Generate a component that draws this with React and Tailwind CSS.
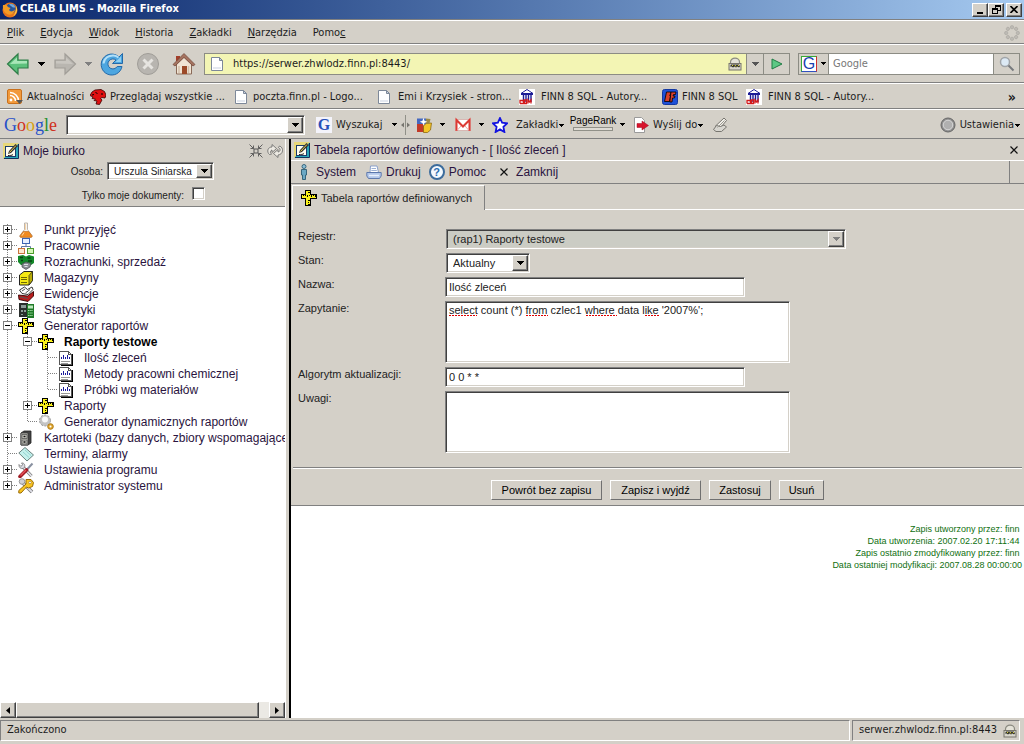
import React, { useState } from "react";

const sunken =
  "border border-t-[#808080] border-l-[#808080] border-r-white border-b-white shadow-[inset_1px_1px_0_#404040,inset_-1px_-1px_0_#d4d0c8]";
const raised =
  "border border-t-white border-l-white border-r-[#404040] border-b-[#404040] shadow-[inset_-1px_-1px_0_#808080] bg-[#d4d0c8]";
const toolbarLine = "border-b border-b-[#808080] shadow-[0_1px_0_#fff] mb-px";

/* ---------- small shared pieces ---------- */

const Caret = ({ className = "text-black" }) => (
  <svg className={`shrink-0 ${className}`} width="7" height="4" viewBox="0 0 7 4" shapeRendering="crispEdges" aria-hidden="true">
    <path d="M0 0h7v1H0zM1 1h5v1H1zM2 2h3v1H2zM3 3h1v1H3z" fill="currentColor" />
  </svg>
);

const SmallCaret = () => (
  <svg className="shrink-0" width="5" height="3" viewBox="0 0 5 3" shapeRendering="crispEdges" aria-hidden="true">
    <path d="M0 0h5v1H0zM1 1h3v1H1zM2 2h1v1H2z" fill="#000" />
  </svg>
);

const Icon = ({ size = 16, box = 16, children }) => (
  <svg className="shrink-0" width={size} height={size} viewBox={`0 0 ${box} ${box}`} fill="none" aria-hidden="true">
    {children}
  </svg>
);

const Select = ({ id, label, options, disabled, className }) => (
  <div className={`relative ${sunken} ${disabled ? "bg-[#cbccc4]" : "bg-white"} ${className}`}>
    <select
      id={id}
      aria-label={label}
      disabled={disabled}
      className="block h-full w-full appearance-none bg-transparent pl-1.5 pr-5 opacity-100 outline-none text-[#222]"
    >
      {options.map((o) => (
        <option key={o}>{o}</option>
      ))}
    </select>
    <span className={`pointer-events-none absolute inset-y-px right-px flex w-4 items-center justify-center ${raised}`}>
      <Caret className={disabled ? "text-[#808080]" : "text-black"} />
    </span>
  </div>
);

/* ---------- icons ---------- */

const FirefoxIcon = () => (
  <Icon>
    <circle cx="8" cy="8" r="7.5" fill="#e8741a" />
    <circle cx="8.6" cy="6.8" r="5" fill="#27559c" />
    <path d="M7 2.4c3-1.400 6 .6 6.400 3l-2.400.2L9 4z" fill="#6fa8dc" />
    <path d="M1 3c1.500.2 2.500-.8 3.500 0l1.500 2 2.500 1-1.500 2c1 2 4 2 6-.5C12 12 8 14 5 12 2 10.500.5 7 1 3z" fill="#f49b25" />
    <path d="M14 4c2 3 1.200 8-3 10.500 2-2.500 3.500-6 3-10.500z" fill="#fbd34b" />
  </Icon>
);

const BackIcon = () => (
  <Icon size={24} box={24}>
    <path d="M1.500 12L12 2v6h10v8H12v6z" fill="#5cc17c" stroke="#2f7d48" strokeWidth="1.200" />
    <path d="M4 12l7-6.500V9h10v2.500z" fill="#a8e6b8" />
  </Icon>
);

const ForwardIcon = () => (
  <Icon size={24} box={24}>
    <path d="M22.500 12L12 2v6H2v8h10v6z" fill="#b9b6b0" stroke="#a19e98" strokeWidth="1.200" />
    <path d="M20 12l-7-6.500V9H3v2.500z" fill="#c9c6c0" />
  </Icon>
);

const ReloadIcon = () => (
  <Icon size={24} box={24}>
    <path d="M22.500 1.500v10h-10l3.500-3.500a5 5 0 1 0 1.200 6.500h4.800A10.500 10.500 0 1 1 19 5z" fill="#4da6e0" stroke="#2469a8" />
    <path d="M3.500 11.500C4 6 9 3 14 3.500c2 .2 3.500 1.200 4.500 2" stroke="#b4e0f8" strokeWidth="2" />
    <path d="M21 4.500v5.500h-5.500z" fill="#8fd0f2" />
  </Icon>
);

const StopIcon = () => (
  <Icon size={24} box={24}>
    <circle cx="12" cy="12" r="10.500" fill="#b8b5b0" stroke="#a09d98" />
    <path d="M7.500 7.500l9 9M16.500 7.500l-9 9" stroke="#e6e4e0" strokeWidth="3" />
  </Icon>
);

const HomeIcon = () => (
  <Icon size={24} box={24}>
    <path d="M4 4h4v5H4z" fill="#a33f2a" />
    <path d="M4.500 12L12 5l7.500 7v10h-15z" fill="#f0e4d4" stroke="#8a6a58" />
    <path d="M1 12.500L12 1.500l11 11-2 1.500-9-8.500L3 14z" fill="#a57360" stroke="#6d4336" strokeWidth=".7" />
    <path d="M10 14h5v8h-5z" fill="#9c4a28" />
    <path d="M16.500 14v7M7 14v7" stroke="#d3c0ac" strokeWidth="1.500" />
  </Icon>
);

const PageIcon = () => (
  <Icon>
    <path d="M2.500 1.500h8l3 3v10h-11z" fill="#fff" stroke="#7d8899" />
    <path d="M10.500 1.500v3h3z" fill="#c9d3e2" stroke="#7d8899" />
    <path d="M4 11h8v2H4z" fill="#e4e8f0" />
  </Icon>
);

const RssIcon = () => (
  <Icon>
    <rect x=".5" y=".5" width="14" height="14" rx="1.500" fill="#f29a3c" stroke="#c8701c" />
    <circle cx="4" cy="11" r="1.400" fill="#fff" />
    <path d="M3 6.500a5.500 5.500 0 0 1 5.500 5.500M3 3.500a8.500 8.500 0 0 1 8.500 8.500" stroke="#fff" strokeWidth="1.600" />
    <path d="M9 11h7l-3.500 4z" fill="#555" />
  </Icon>
);

const DragonIcon = () => (
  <Icon>
    <path d="M0 6.500L2 3l3-2 6-.5 3.500 2L16 6l-1 3-3-.5-1.500 1L12 11l-2.500 4.500L6 15l1-3-3-.5 1.500-1.500L2 9.500l1-1.500z" fill="#e01010" stroke="#3b0000" strokeWidth=".8" />
    <path d="M5.500 3.500l2 1M11 5h2M2 6l2-.5" stroke="#000" />
  </Icon>
);

const DomIcon = () => (
  <Icon>
    <rect width="16" height="16" fill="#fff" />
    <path d="M2 4.500L8 .5l6 4zM2 5.500h12" fill="#fff" stroke="#1c1c96" />
    <path d="M4.500 6v7M7 6v7M9.500 6v7M12 6v7" stroke="#1c1c96" strokeWidth="1.400" />
    <path d="M1 14.500h3.500v-4M1 14.500v-3h3M5.500 11v3.500h2V11zM9 14.500V11l1.500 2 1.500-2v3.500" stroke="#d21a1a" strokeWidth="1.300" />
  </Icon>
);

const BfIcon = () => (
  <Icon>
    <rect x=".5" y=".5" width="15" height="15" rx="2" fill="#1e50d8" stroke="#1438a0" />
    <path d="M4.500 3H9l-.5 3H7.500l1 1-1 5.500h-5z" fill="#d8402c" stroke="#000" strokeWidth=".8" />
    <path d="M9 3h5l-.5 2.500h-2L11 7h2l-.5 2h-2L10 13H7.800z" fill="#d8402c" stroke="#000" strokeWidth=".8" />
  </Icon>
);

const GBadge = ({ framed }) => (
  <span
    className={
      framed
        ? "flex h-4 w-4 items-center justify-center border border-t-[#38a838] border-l-[#38a838] border-r-[#d03030] border-b-[#3050c0] bg-white font-['Liberation_Sans',sans-serif] text-base leading-none text-[#1840b0]"
        : "flex h-4 w-4 shrink-0 items-center justify-center bg-[#f4f4fb] font-['Liberation_Serif',serif] text-base leading-none font-bold text-[#2850b8]"
    }
  >
    G
  </span>
);

const LockIcon = () => (
  <Icon size={14} box={14}>
    <path d="M2.500 6.500V5a4.500 3.800 0 0 1 9 0v1.500" fill="#e4e2d8" stroke="#8a8a80" strokeWidth="1.200" />
    <rect x="1" y="6.500" width="12" height="6.500" fill="#d8d6cc" stroke="#77756c" />
    <path d="M2 9.500L3 7.500h8l1 2-1 1-1.500-1L8 10.500l-1.500-1-1.500 1-1.500-1z" fill="#35352a" />
    <path d="M4 8l1 1M7 8l1 1.500M10 8l1 1" stroke="#d9cf3c" />
  </Icon>
);

const ThrobberIcon = () => (
  <Icon>
    {[0, 45, 90, 135, 180, 225, 270, 315].map((a) => (
      <circle key={a} cx="8" cy="2.200" r="1.700" fill="#bdbab4" stroke="#a5a29c" strokeWidth=".5" transform={`rotate(${a} 8 8)`} />
    ))}
  </Icon>
);

const SearchIcon = () => (
  <Icon>
    <circle cx="6" cy="6" r="4.500" fill="#dce9f4" stroke="#a0a4a8" strokeWidth="1.500" />
    <path d="M9.500 9.500l5 5" stroke="#77797c" strokeWidth="2" />
  </Icon>
);

const CubesIcon = () => (
  <Icon>
    <rect x="1" y="1.500" width="9" height="6" fill="#4468c0" />
    <rect x="1" y="7" width="7" height="8" fill="#c23a28" />
    <path d="M7.500 9L10 6.500l5.500-.5-1 7-3 2.500h-4z" fill="#f4c428" stroke="#8d6a10" strokeWidth=".8" />
    <path d="M10 1.500l4.500.5-1 4.500H9.500z" fill="#9c8a48" />
    <path d="M7.500.8l1 2.900 2.800 1.100-2.800 1.100-1 2.900-1-2.900-2.800-1.100 2.800-1.100z" fill="#fff" />
  </Icon>
);

const MailIcon = () => (
  <Icon>
    <rect x=".5" y="2.500" width="15" height="11" fill="#fff" stroke="#d8b8b4" />
    <path d="M1.500 14V3L8 9.500 14.500 3v11" stroke="#dc3a34" strokeWidth="2" />
    <path d="M2 13.500l4-4.500M14 13.500L10 9" stroke="#eaa8a4" />
  </Icon>
);

const StarIcon = () => (
  <Icon>
    <path d="M8 1l2.100 4.700 5 .6-3.700 3.500 1 5.200L8 12.400 3.600 15l1-5.200L.9 6.300l5-.6z" fill="#fff" stroke="#1414e0" strokeWidth="1.800" />
  </Icon>
);

const SendIcon = () => (
  <Icon>
    <path d="M1.500.5h7l3 3v12h-10z" fill="#fff" stroke="#9a9a9a" />
    <path d="M4 6.500h5V4l6.500 4.500L9 13v-2.500H4z" fill="#d8142c" stroke="#a00c20" strokeWidth=".5" />
  </Icon>
);

const PenIcon = () => (
  <Icon>
    <path d="M3 9.500L12 1l2.500 2.500L9 10z" fill="#f0eee8" stroke="#77756f" />
    <path d="M1.500 12.500l3-4 4 1L12 8l2.500 2-5 4.500H4z" fill="#d8d6d0" stroke="#77756f" />
    <path d="M5.500 10.500l7-7" stroke="#99978f" />
  </Icon>
);

const DeskIcon = () => (
  <Icon>
    <rect x=".5" y=".5" width="15" height="15" fill="#2aa7b8" />
    <path d="M0 0h16L0 16z" fill="#e8d878" />
    <rect x="2.500" y="3.500" width="10" height="10" fill="#fffdf0" stroke="#1a3a6c" />
    <path d="M5 11l1-3 6.500-7L15 3 8 10z" fill="#333" />
    <path d="M6.500 9.500L13 2.500" stroke="#e6c94a" />
    <path d="M5 12.500c2 0 4 0 5-1" stroke="#222" />
    <path d="M15.500 1v14.500H1" stroke="#10305c" />
  </Icon>
);

const ShrinkIcon = () => (
  <Icon size={14} box={14}>
    <rect x="5" y="5" width="4" height="4" stroke="#555" />
    <path d="M.5.5l4 4M4.500 1.500v3h-3M13.500.5l-4 4M9.500 1.500v3h3M.5 13.500l4-4M1.500 9.500h3v3M13.500 13.500l-4-4M12.500 9.500h-3v3" stroke="#555" strokeWidth=".9" />
  </Icon>
);

const RefreshIcon = () => (
  <Icon>
    <path d="M2.500 11.500C-.5 9 .5 4 5 4V1.500l4.500 4L5 9.500V7C3.500 7.500 2.500 9.500 4.500 11z" fill="#ece9e2" stroke="#666" strokeWidth=".8" />
    <path d="M12.500 3c4.500 1.500 4 8.500-1.500 9v2.500L6.500 10.500 11 6.500V9c2.500-.5 3-3 .5-4.500z" fill="#ece9e2" stroke="#666" strokeWidth=".8" />
  </Icon>
);

const RulerIcon = () => (
  <svg className="shrink-0" width="16" height="16" viewBox="0 0 16 16" shapeRendering="crispEdges" aria-hidden="true">
    <path d="M4 0h6v4h6v5h-6v7H4V9H0V4h4z" fill="#000" />
    <path d="M5 1h4v4h6v3H9v7H5V8H1V5h4z" fill="#f8f01c" />
    <path d="M2 5h1v1H2zM4 5h1v1H4zM6 5h1v2H6zM8 5h1v1H8zM10 5h1v2h-1zM12 5h1v1h-1zM14 5h1v2h-1zM7 2h2v1H7zM7 10h2v1H7zM7 12h1v1H7zM7 14h2v1H7z" fill="#000" />
  </svg>
);

const ReportIcon = () => (
  <svg className="shrink-0" width="16" height="16" viewBox="0 0 16 16" shapeRendering="crispEdges" fill="none" aria-hidden="true">
    <path d="M1.500 1.500h9l3 3v10h-12z" fill="#fff" stroke="#555" />
    <path d="M10.500 1.500v3h3" stroke="#555" />
    <path d="M14 4h1v12H3v-1h11z" fill="#000" />
    <path d="M3 7h1v2H3zM5 5h1v4H5zM7 7h1v2H7zM9 5h1v4H9zM11 7h1v2h-1z" fill="#1a1a9c" />
    <path d="M3 11h9v1H3zM3 13h7v1H3z" fill="#999" />
  </svg>
);

const FlaskIcon = () => (
  <Icon>
    <path d="M6.500 1h3v6.500l4.500 6c.3 1-.3 1.800-1 1.800H3c-.8 0-1.300-.8-1-1.800l4.500-6z" fill="#f4f4f4" stroke="#b0a498" strokeWidth=".8" />
    <path d="M5.200 9.500h5.600l3.200 4.300c.3 1-.3 1.500-1 1.500H3c-.8 0-1.300-.5-1-1.500z" fill="#f08a20" stroke="#b86418" strokeWidth=".6" />
    <path d="M6 10.500l-2 3.200M7.500 2v6" stroke="#fcd8a8" />
  </Icon>
);

const NetworkIcon = () => (
  <Icon>
    <rect x="4.500" y=".5" width="7" height="5" fill="#e8f0ff" stroke="#3c64b4" />
    <path d="M8 6v2M3.500 10V8.500h9V10" stroke="#6078a8" />
    <rect x=".5" y="10.500" width="6" height="5" fill="#ffe8d0" stroke="#c8743c" />
    <rect x="9.500" y="10.500" width="6" height="5" fill="#d4f8b8" stroke="#4c9c2c" />
  </Icon>
);

const MoneyIcon = () => (
  <Icon>
    <path d="M0 2l5-1 3 1.500L11 1l5 1.500V9l-3 2H3L0 8z" fill="#128828" />
    <path d="M2 3.500h3M9.500 4h3M3 6.500h2M10 7h4" stroke="#064510" strokeWidth="1.600" />
    <path d="M4 10l4-2 5 1.500-1 3.500-4 2.500L4 13z" fill="#8a8d94" stroke="#44464c" strokeWidth=".7" />
    <path d="M6 10.500h4M6.500 12.500h3" stroke="#dcdce4" />
  </Icon>
);

const BoxIcon = () => (
  <Icon>
    <path d="M1.500 5L6 1.500h8.500v9L11 15H1.500z" fill="#f4e814" stroke="#222" />
    <path d="M11 5.500V15l3.500-4.500v-9z" fill="#b8ac08" stroke="#222" strokeWidth=".7" />
    <path d="M3 7.500h6M3 9.500h6M3 12.500h6" stroke="#6c6600" />
  </Icon>
);

const TrayIcon = () => (
  <Icon>
    <path d="M1.500 4L6.500 1l3 2.500L14 1l1 2.500L10 8.500 4 7.500z" fill="#fff" stroke="#222" strokeWidth=".9" />
    <path d="M.5 9l9 1 6-4.500V10L10 15.500 1 13.500z" fill="#b81c1c" stroke="#300" strokeWidth=".9" />
    <path d="M4 5l3-2M7.500 7L12 3.500M2 11l7.500 1.500" stroke="#555" />
  </Icon>
);

const StatsIcon = () => (
  <Icon>
    <rect x="1" y="1" width="9" height="14" fill="#2a2e2c" />
    <path d="M3 3h5v3H3zM3 8h2v2H3zM6 8h2v2H6zM3 12h2v1H3z" fill="#8c9c98" />
    <rect x="9" y="2" width="7" height="14" fill="#1f7a28" />
    <path d="M10 3.500h5v3h-5z" fill="#bce8bc" />
    <path d="M10 8.500h5M10 11h5M10 13.500h5" stroke="#a4dca4" strokeDasharray="1.500 .7" />
  </Icon>
);

const GearIcon = () => (
  <Icon>
    <circle cx="7" cy="6.500" r="5.500" fill="#c4c4c4" />
    <circle cx="7" cy="6.500" r="5.500" stroke="#999" strokeDasharray="2 1.500" />
    <circle cx="7" cy="5.500" r="3" fill="#f8f8f8" />
    <circle cx="12.500" cy="12.500" r="2.800" fill="#e0a830" stroke="#b07c18" />
    <circle cx="12.500" cy="12.500" r="1" fill="#fff" />
  </Icon>
);

const CabinetIcon = () => (
  <Icon>
    <path d="M3 3l3-2h7v12l-3 2H3z" fill="#444" stroke="#222" strokeWidth=".8" />
    <path d="M3 3h7v12H3z" fill="#c8c8c0" stroke="#333" strokeWidth=".8" />
    <path d="M4 4.500h5v4H4zM4 10h5v4H4z" stroke="#555" strokeWidth=".8" />
    <path d="M5.500 6.500h2M5.500 12h2" stroke="#111" strokeWidth="1.400" />
  </Icon>
);

const NoteIcon = () => (
  <Icon>
    <path d="M7 1.500L15.500 9 9 15 .8 7z" fill="#c4f0ec" stroke="#68807c" />
    <path d="M7 4l6 5.500M5 6l6 5.500" stroke="#94d4d0" />
  </Icon>
);

const ToolsIcon = () => (
  <Icon>
    <path d="M4 4l9.500 10" stroke="#777" strokeWidth="3.200" />
    <path d="M4 4l9.500 10" stroke="#e4e4ea" strokeWidth="1.800" />
    <path d="M1 2.500L2.800 4.300l2-1.500L3.500 1C6 .5 7.500 3 6.500 5.500L5 6.500C2.500 7 .5 5 1 2.500z" fill="#dcdce4" stroke="#777" strokeWidth=".8" />
    <path d="M9 7.500L14.500 1.500" stroke="#8890a0" strokeWidth="2" />
    <path d="M8.500 8L2 14.500" stroke="#a01c24" strokeWidth="3.600" strokeLinecap="round" />
    <path d="M8 8L2.500 13.500" stroke="#e85058" strokeWidth="1.400" />
  </Icon>
);

const KeyIcon = () => (
  <Icon>
    <path d="M3 3l11 11" stroke="#777" strokeWidth="3.600" />
    <path d="M3 3l11 11" stroke="#dcdce4" strokeWidth="2" />
    <circle cx="4" cy="3.500" r="2.800" fill="#d0d0d4" stroke="#888" strokeWidth=".8" />
    <path d="M8 1.500h5l2.500 3-1 4-4 1.500-2-1-5.500 6H.8v-2.500L8 6z" fill="#f8c420" stroke="#9a6c08" />
    <circle cx="12" cy="4.500" r="1.300" fill="#fff" stroke="#9a6c08" strokeWidth=".6" />
  </Icon>
);

const PersonIcon = () => (
  <Icon>
    <circle cx="8" cy="2.500" r="2" fill="#8cc0d8" stroke="#2c5c74" strokeWidth=".9" />
    <path d="M5.500 5.500h5V11H9.500v4.500h-3V11h-1z" fill="#6ca8c4" stroke="#2c5c74" strokeWidth=".9" />
  </Icon>
);

const PrinterIcon = () => (
  <Icon>
    <path d="M4 8.500L4.500 2h6.500L12.500 8.500z" fill="#fff" stroke="#8098c8" strokeWidth=".9" />
    <path d="M.8 8.500h14.400v3.500l-1.700 2.500H2.500L.8 12z" fill="#b4c8ea" stroke="#5470a8" strokeWidth=".9" />
    <path d="M3 11.500h10" stroke="#e8f0fc" strokeWidth="1.400" />
    <path d="M5.500 4.500h4.500M5.300 6.500h5.500" stroke="#9cb0d4" />
  </Icon>
);

const HelpIcon = () => (
  <span className="flex h-4 w-4 shrink-0 items-center justify-center rounded-full border-2 border-[#3c6c9c] bg-[#f4faff] text-[11px] leading-none font-bold text-[#2a6cb0]">
    ?
  </span>
);

const CloseGlyph = () => (
  <svg width="8" height="8" viewBox="0 0 8 8" aria-hidden="true">
    <path d="M.5.5l7 7M7.500.5l-7 7" stroke="#111" strokeWidth="1.200" />
  </svg>
);

/* ---------- browser chrome ---------- */

const TitleBar = () => (
  <header className="flex h-[19px] shrink-0 items-center bg-gradient-to-r from-[#0a246a] to-[#a6caf0] px-0.5">
    <FirefoxIcon />
    <h1 className="ml-0.5 flex-1 font-bold text-white">CELAB LIMS - Mozilla Firefox</h1>
    <div className="flex">
      <button aria-label="Minimalizuj" className={`flex h-3.5 w-4 items-end justify-center pb-0.5 ${raised}`}>
        <span className="h-0.5 w-1.5 bg-black" />
      </button>
      <button aria-label="Przywróć" className={`flex h-3.5 w-4 items-center justify-center ${raised}`}>
        <svg width="9" height="9" viewBox="0 0 9 9" shapeRendering="crispEdges" fill="none">
          <path d="M3 0h6v6H6V5h2V2H4v1H3zM0 3h6v6H0zm1 2v3h4V5z" fill="#000" fillRule="evenodd" />
        </svg>
      </button>
      <button aria-label="Zamknij okno" className={`ml-0.5 flex h-3.5 w-4 items-center justify-center ${raised}`}>
        <svg width="8" height="7" viewBox="0 0 8 7">
          <path d="M.5 0l7 7M7.500 0l-7 7" stroke="#000" strokeWidth="1.600" />
        </svg>
      </button>
    </div>
  </header>
);

const menus = [
  ["", "P", "lik"],
  ["", "E", "dycja"],
  ["", "W", "idok"],
  ["", "H", "istoria"],
  ["", "Z", "akładki"],
  ["", "N", "arzędzia"],
  ["Pomo", "c", ""],
];

const MenuBar = () => (
  <nav className={`flex h-6 shrink-0 items-center gap-4 border-t border-t-white pl-[7px] pr-1 pt-0.5 ${toolbarLine}`}>
    {menus.map(([before, key, after]) => (
      <button key={before + key + after}>
        {before}
        <u>{key}</u>
        {after}
      </button>
    ))}
    <span className="ml-auto">
      <ThrobberIcon />
    </span>
  </nav>
);

const NavBar = () => (
  <div className={`flex h-[38px] shrink-0 items-center pl-1.5 pr-1 ${toolbarLine}`}>
    <button aria-label="Wstecz"><BackIcon /></button>
    <button aria-label="Historia wstecz" className="ml-2 mr-2"><Caret /></button>
    <button aria-label="Dalej"><ForwardIcon /></button>
    <button aria-label="Historia dalej" className="ml-2 mr-2"><Caret className="text-[#808080]" /></button>
    <button aria-label="Odśwież"><ReloadIcon /></button>
    <button aria-label="Zatrzymaj" className="ml-3"><StopIcon /></button>
    <button aria-label="Strona domowa" className="ml-3"><HomeIcon /></button>

    <div className="ml-2 flex h-[22px] flex-1 border border-[#8c8c84]">
      <div className="flex flex-1 items-center gap-1 bg-[#f3f5b4] px-1">
        <PageIcon />
        <input aria-label="Adres" defaultValue="https://serwer.zhwlodz.finn.pl:8443/" className="min-w-0 flex-1 pl-1 pt-0.5 outline-none" />
        <LockIcon />
      </div>
      <button aria-label="Lista adresów" className="flex w-[17px] items-center justify-center border-l border-[#8c8c84]">
        <Caret className="text-[#555]" />
      </button>
      <button aria-label="Przejdź" className="flex w-[26px] items-center justify-center border-l border-[#8c8c84]">
        <svg width="12" height="12" viewBox="0 0 12 12">
          <path d="M1 1l10 5-10 5z" fill="#5cc884" stroke="#1f7c44" />
        </svg>
      </button>
    </div>

    <div className="ml-2 flex h-[22px] w-[222px] border border-[#8c8c84]">
      <button aria-label="Wyszukiwarka" className="flex w-[30px] items-center justify-center gap-1 border-r border-[#8c8c84]">
        <GBadge framed />
        <SmallCaret />
      </button>
      <input aria-label="Szukaj" placeholder="Google" className="min-w-0 flex-1 bg-white pl-1 pt-0.5 outline-none placeholder:text-[#777]" />
      <button aria-label="Szukaj w Google" className="flex w-[26px] items-center justify-center border-l border-[#8c8c84]">
        <SearchIcon />
      </button>
    </div>
  </div>
);

const bookmarks = [
  { label: "Aktualności", icon: <RssIcon />, width: "w-[83px] gap-1" },
  { label: "Przeglądaj wszystkie ...", icon: <DragonIcon />, width: "w-[143px] gap-1" },
  { label: "poczta.finn.pl - Logo...", icon: <PageIcon />, width: "w-[143px] gap-1" },
  { label: "Emi i Krzysiek - stron...", icon: <PageIcon />, width: "w-[143px] gap-1.5" },
  { label: "FINN 8 SQL - Autory...", icon: <DomIcon />, width: "w-[143px] gap-1.5" },
  { label: "FINN 8 SQL", icon: <BfIcon />, width: "w-[84px] gap-1" },
  { label: "FINN 8 SQL - Autory...", icon: <DomIcon />, width: "w-[143px] gap-1.5" },
];

const BookmarksBar = () => (
  <div className={`flex h-[25px] shrink-0 items-center pl-[7px] pr-2 pt-px ${toolbarLine}`}>
    {bookmarks.map((b, i) => (
      <a key={i} href="#" className={`flex shrink-0 items-center whitespace-nowrap ${b.width}`}>
        {b.icon}
        <span className="pt-px">{b.label}</span>
      </a>
    ))}
    <button aria-label="Więcej zakładek" className="ml-auto text-sm font-bold">»</button>
  </div>
);

const GoogleBar = () => (
  <div className="flex h-[29px] shrink-0 items-center border-b border-b-[#808080] pl-1 pr-1 pt-px">
    <span className="w-[62px] font-['Liberation_Serif',serif] text-lg leading-none">
      <span className="text-[#2850c8]">G</span>
      <span className="text-[#d03020]">o</span>
      <span className="text-[#d8a010]">o</span>
      <span className="text-[#2850c8]">g</span>
      <span className="text-[#289030]">l</span>
      <span className="text-[#d03020]">e</span>
    </span>
    <div className={`flex h-5 w-[239px] bg-white p-px ${sunken}`}>
      <input aria-label="Szukaj Google" className="min-w-0 flex-1 pl-1 outline-none" />
      <button aria-label="Poprzednie wyszukiwania" className={`flex w-4 items-center justify-center ${raised}`}>
        <Caret />
      </button>
    </div>
    <button className="ml-[11px] flex w-[81px] items-center gap-1">
      <GBadge />
      <span className="pt-0.5">Wyszukaj</span>
      <span className="ml-auto"><SmallCaret /></span>
    </button>
    <svg className="ml-1 shrink-0" width="9" height="20" viewBox="0 0 9 20" fill="none">
      <path d="M4.500 0v20" stroke="#909088" />
      <path d="M3 7.500v5L0 10zM6 7.500v5L9 10z" fill="#77756f" />
    </svg>
    <button aria-label="Nowości" className="ml-1.5 flex items-center gap-2"><CubesIcon /><SmallCaret /></button>
    <button aria-label="Gmail" className="ml-2.5 flex items-center gap-2"><MailIcon /><SmallCaret /></button>
    <button className="ml-2 flex w-[70px] items-center gap-2">
      <StarIcon />
      <span className="flex items-center gap-px pt-0.5">Zakładki<SmallCaret /></span>
    </button>
    <button className="ml-2 flex items-center gap-1">
      <span className="flex w-[46px] flex-col items-center pb-1 font-['Liberation_Sans',sans-serif] text-[10px] leading-3 text-black">
        PageRank
        <span className="h-1 w-10 border border-[#909088] bg-[#dedbd4]" />
      </span>
      <SmallCaret />
    </button>
    <button className="ml-2 flex w-[71px] items-center gap-1 whitespace-nowrap">
      <SendIcon />
      <span className="flex items-center gap-px pt-0.5">Wyślij do<SmallCaret /></span>
    </button>
    <button aria-label="Podświetl" className="ml-2"><PenIcon /></button>
    <button className="ml-auto flex items-center gap-1">
      <Icon>
        <circle cx="8" cy="8" r="7" fill="#8f8f8f" stroke="#666" />
        <circle cx="8" cy="8" r="4.800" fill="#b0b0b0" stroke="#d8d8d8" />
      </Icon>
      <span className="flex items-center gap-px pt-0.5">Ustawienia<SmallCaret /></span>
    </button>
  </div>
);

/* ---------- left panel ---------- */

// guides: one dotted column per ancestor level; node: plus | minus | leaf
const tree = [
  { label: "Punkt przyjęć", icon: <FlaskIcon />, guides: [], node: "plus", first: true },
  { label: "Pracownie", icon: <NetworkIcon />, guides: [], node: "plus" },
  { label: "Rozrachunki, sprzedaż", icon: <MoneyIcon />, guides: [], node: "plus" },
  { label: "Magazyny", icon: <BoxIcon />, guides: [], node: "plus" },
  { label: "Ewidencje", icon: <TrayIcon />, guides: [], node: "plus" },
  { label: "Statystyki", icon: <StatsIcon />, guides: [], node: "plus" },
  { label: "Generator raportów", icon: <RulerIcon />, guides: [], node: "minus" },
  { label: "Raporty testowe", icon: <RulerIcon />, guides: [1], node: "minus", bold: true },
  { label: "Ilość zleceń", icon: <ReportIcon />, guides: [1, 1], node: "leaf" },
  { label: "Metody pracowni chemicznej", icon: <ReportIcon />, guides: [1, 1], node: "leaf" },
  { label: "Próbki wg materiałów", icon: <ReportIcon />, guides: [1, 1], node: "leaf", last: true },
  { label: "Raporty", icon: <RulerIcon />, guides: [1], node: "plus" },
  { label: "Generator dynamicznych raportów", icon: <GearIcon />, guides: [1], node: "leaf", last: true },
  { label: "Kartoteki (bazy danych, zbiory wspomagające", icon: <CabinetIcon />, guides: [], node: "plus" },
  { label: "Terminy, alarmy", icon: <NoteIcon />, guides: [], node: "leaf" },
  { label: "Ustawienia programu", icon: <ToolsIcon />, guides: [], node: "plus" },
  { label: "Administrator systemu", icon: <KeyIcon />, guides: [], node: "plus", last: true },
];

const Branch = ({ node, first, last }) => (
  <svg className="shrink-0" width="18" height="16" viewBox="0 0 18 16" fill="none" shapeRendering="crispEdges" aria-hidden="true">
    <path d={`M7.500 ${first ? 2 : 0}V${last ? 8 : 16}`} stroke="#808080" strokeDasharray="1 1" />
    <path d="M8 7.500h10" stroke="#808080" strokeDasharray="1 1" />
    {node !== "leaf" && (
      <>
        <rect x="3.500" y="3.500" width="8" height="8" fill="#fff" stroke="#808080" />
        <path d="M5 7.500h5" stroke="#000" />
      </>
    )}
    {node === "plus" && <path d="M7.500 5v5" stroke="#000" />}
  </svg>
);

const Tree = () => (
  <ul className="flex-1 overflow-hidden bg-white pt-[15px] text-xs text-[#2a1440]">
    {tree.map((item) => (
      <li key={item.label} className="flex h-4 items-center whitespace-nowrap">
        {item.guides.map((g, i) => (
          <svg key={i} className="shrink-0" width="20" height="16" viewBox="0 0 20 16" shapeRendering="crispEdges" aria-hidden="true">
            <path d="M7.500 0v16" stroke="#808080" strokeDasharray="1 1" />
          </svg>
        ))}
        <Branch node={item.node} first={item.first} last={item.last} />
        {item.icon}
        <a href="#" className={`ml-2.5 ${item.bold ? "font-bold text-black" : ""}`}>
          {item.label}
        </a>
      </li>
    ))}
  </ul>
);

const Sidebar = () => (
  <aside className="flex w-[285px] shrink-0 flex-col overflow-hidden font-['Liberation_Sans',sans-serif]">
    <div className="border-b border-b-[#808080] pb-[3px]">
      <div className="flex h-[23px] items-center gap-1 pl-[3px] pr-0.5 text-xs text-[#2a1440]">
        <DeskIcon />
        <h2 className="flex-1">Moje biurko</h2>
        <button aria-label="Zwiń"><ShrinkIcon /></button>
        <button aria-label="Odśwież drzewo"><RefreshIcon /></button>
      </div>
      <div className="flex items-center justify-end gap-1 pr-[71px] text-[10px]">
        <label htmlFor="osoba">Osoba:</label>
        <Select id="osoba" options={["Urszula Siniarska"]} className="h-[18px] w-[107px]" />
      </div>
      <div className="mt-1 flex items-center justify-end gap-2 pr-20 text-[10px]">
        <label htmlFor="moje" className="pt-1">Tylko moje dokumenty:</label>
        <input id="moje" type="checkbox" className={`h-[13px] w-[13px] appearance-none bg-white ${sunken}`} />
      </div>
    </div>
    <Tree />
    <div className="flex h-4 shrink-0 bg-[#ebe9e4]">
      <button aria-label="Przewiń w lewo" className={`flex w-4 items-center justify-center ${raised}`}>
        <svg width="4" height="7" viewBox="0 0 4 7"><path d="M4 0v7L0 3.500z" /></svg>
      </button>
      <div className={`w-[243px] ${raised}`} />
      <button aria-label="Przewiń w prawo" className={`ml-auto flex w-4 items-center justify-center ${raised}`}>
        <svg width="4" height="7" viewBox="0 0 4 7"><path d="M0 0v7l4-3.500z" /></svg>
      </button>
    </div>
  </aside>
);

/* ---------- main panel ---------- */

const Misspelled = () => (
  <svg className="pointer-events-none absolute left-1 top-3.5 h-px w-[220px]" viewBox="0 0 220 1" shapeRendering="crispEdges" aria-hidden="true">
    <path d="M0 .5h28M77 .5h22M137 .5h31M196 .5h14" fill="none" stroke="#e00000" strokeDasharray="2 1" />
  </svg>
);

const FormLabel = ({ htmlFor, children }) => (
  <label htmlFor={htmlFor} className="leading-[14px]">
    {children}
  </label>
);

const ReportForm = () => {
  const [name, setName] = useState("Ilość zleceń");
  const [query, setQuery] = useState("select count (*) from czlec1 where data like '2007%';");
  const [schedule, setSchedule] = useState("0 0 * *");
  const [notes, setNotes] = useState("");

  const field = `bg-white pl-[3px] outline-none ${sunken}`;

  return (
    <form className="border-b border-b-[#808080] text-[11px] text-[#222]" onSubmit={(e) => e.preventDefault()}>
      <div className="grid grid-cols-[147px_1fr] items-start gap-y-1 pb-3.5 pl-[7px] pt-[19px]">
        <FormLabel htmlFor="rejestr">Rejestr:</FormLabel>
        <Select id="rejestr" disabled options={["(rap1) Raporty testowe"]} className="ml-px h-5 w-[400px]" />
        <FormLabel htmlFor="stan">Stan:</FormLabel>
        <Select id="stan" options={["Aktualny", "Archiwalny"]} className="ml-px h-5 w-[84px]" />
        <FormLabel htmlFor="nazwa">Nazwa:</FormLabel>
        <input id="nazwa" value={name} onChange={(e) => setName(e.target.value)} className={`h-5 w-[300px] ${field}`} />
        <FormLabel htmlFor="zapytanie">Zapytanie:</FormLabel>
        <div className="relative h-[62px] w-[345px]">
          <textarea
            id="zapytanie"
            spellCheck={false}
            value={query}
            onChange={(e) => setQuery(e.target.value)}
            className={`block h-full w-full resize-none pt-px leading-[14px] ${field}`}
          />
          <Misspelled />
        </div>
        <FormLabel htmlFor="algorytm">Algorytm aktualizacji:</FormLabel>
        <input id="algorytm" value={schedule} onChange={(e) => setSchedule(e.target.value)} className={`h-5 w-[300px] ${field}`} />
        <FormLabel htmlFor="uwagi">Uwagi:</FormLabel>
        <textarea
          id="uwagi"
          value={notes}
          onChange={(e) => setNotes(e.target.value)}
          className={`h-[62px] w-[345px] resize-none ${field}`}
        />
      </div>
      <hr className="mx-0.5 border-t border-t-[#808080] shadow-[0_1px_0_#fff]" />
      <div className="flex justify-center gap-2 pb-[5px] pt-3">
        {[
          ["Powrót bez zapisu", "w-[111px]"],
          ["Zapisz i wyjdź", "w-[91px]"],
          ["Zastosuj", "w-[62px]"],
          ["Usuń", "w-[45px]"],
        ].map(([text, width]) => (
          <button
            key={text}
            className={`h-5 border border-t-white border-l-white border-r-[#707070] border-b-[#707070] text-black ${width}`}
          >
            {text}
          </button>
        ))}
      </div>
    </form>
  );
};

const RecordInfo = () => (
  <footer className="flex-1 bg-white pr-0.5 pt-[17px] text-right text-[9px] leading-3 text-[#107010]">
    <p>Zapis utworzony przez: finn&nbsp;</p>
    <p>Data utworzenia: 2007.02.20 17:11:44&nbsp;</p>
    <p>Zapis ostatnio zmodyfikowany przez: finn&nbsp;</p>
    <p>Data ostatniej modyfikacji: 2007.08.28 00:00:00</p>
  </footer>
);

const MainPanel = () => (
  <main className="flex min-w-0 flex-1 flex-col font-['Liberation_Sans',sans-serif]">
    <div className="flex h-[22px] shrink-0 items-center gap-1 border-b border-b-white pl-[3px] pr-1.5 text-xs text-[#2a1440]">
      <DeskIcon />
      <h2 className="flex-1">Tabela raportów definiowanych - [ Ilość zleceń ]</h2>
      <button aria-label="Zamknij kartę"><CloseGlyph /></button>
    </div>
    <div className="flex h-[23px] shrink-0 items-center border-b border-b-[#808080] pl-[5px] pr-3.5 text-xs text-[#2a1440]">
      <button className="flex items-center gap-1"><PersonIcon />System</button>
      <button className="ml-2.5 flex items-center gap-1"><PrinterIcon />Drukuj</button>
      <button className="ml-2 flex items-center gap-1"><HelpIcon />Pomoc</button>
      <button className="ml-3.5 flex items-center gap-2"><CloseGlyph />Zamknij</button>
      <span className="ml-auto h-full border-l border-l-[#808080]" />
    </div>
    <div className="flex h-[26px] shrink-0 pt-px text-[11px] text-[#222]">
      <button className="ml-px flex w-[193px] items-center gap-1 whitespace-nowrap border-l border-t border-r border-l-white border-t-white border-r-[#808080] pl-2">
        <RulerIcon />
        Tabela raportów definiowanych
      </button>
      <span className="flex-1 border-b border-b-white" />
    </div>
    <ReportForm />
    <RecordInfo />
  </main>
);

const StatusBar = () => (
  <footer className="flex h-[26px] shrink-0 gap-0.5 pb-[3px] pr-1 pt-0.5">
    <div className="flex flex-1 items-center border border-t-[#808080] border-l-[#808080] border-r-white border-b-white pl-1.5">
      Zakończono
    </div>
    <div className="flex w-[168px] items-center justify-between border border-t-[#808080] border-l-[#808080] border-r-white border-b-white pl-1.5 pr-0.5">
      serwer.zhwlodz.finn.pl:8443
      <LockIcon />
    </div>
  </footer>
);

export default function App() {
  return (
    <div className="flex h-screen min-h-[560px] flex-col overflow-hidden bg-[#d4d0c8] font-['DejaVu_Sans_Condensed','Noto_Sans',sans-serif] text-[11px] text-[#1c1c1c]">
      <TitleBar />
      <div className="h-px shrink-0 bg-[#808080]" />
      <MenuBar />
      <NavBar />
      <BookmarksBar />
      <GoogleBar />
      <div className="flex min-h-0 flex-1">
        <Sidebar />
        <div className="w-1.5 shrink-0 border-l border-r-2 border-l-white border-r-black bg-[#d4d0c8]" />
        <MainPanel />
      </div>
      <StatusBar />
    </div>
  );
}
